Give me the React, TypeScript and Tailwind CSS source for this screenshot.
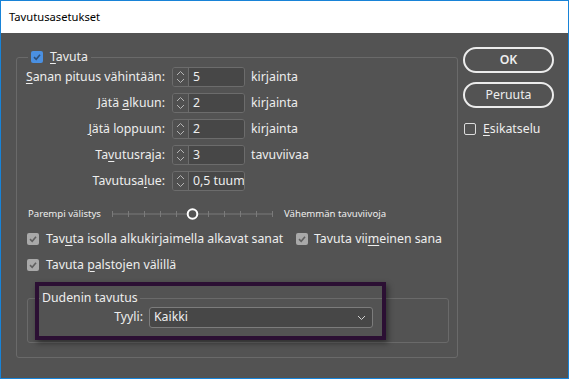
import React from "react";

const TXT = "text-[#eeeeee]";

function Check({ color = "bg-[#a9a9a9]", tick = "#5f5f5f" }: { color?: string; tick?: string }) {
  return (
    <span className={`flex h-[12px] w-[12px] shrink-0 items-center justify-center rounded-[2px] ${color}`}>
      <svg width="10" height="10" viewBox="0 0 10 10">
        <polyline points="2,5.2 4.2,7.3 8,2.8" fill="none" stroke={tick} strokeWidth="1.6" />
      </svg>
    </span>
  );
}

function Spin({ label, value, unit }: { label: React.ReactNode; value: string; unit?: string }) {
  return (
    <div className="flex h-[20px] items-center">
      <div className="w-[148px] whitespace-nowrap text-right">{label}</div>
      <div className="ml-[7px] flex h-[20px] w-[73px] overflow-hidden rounded-[3px] border border-[#6c6c6c]">
        <div className="flex w-[16px] flex-col items-center justify-center border-r border-[#6c6c6c] bg-[#505050]">
          <svg width="9" height="16" viewBox="0 0 9 16">
            <polyline points="1,6 4.5,2.5 8,6" fill="none" stroke="#b5b5b5" strokeWidth="1" />
            <polyline points="1,10 4.5,13.5 8,10" fill="none" stroke="#b5b5b5" strokeWidth="1" />
          </svg>
        </div>
        <div className="flex-1 overflow-hidden whitespace-nowrap bg-[#474747] pl-[4px] leading-[18px]">{value}</div>
      </div>
      {unit && <span className="ml-[6px]">{unit}</span>}
    </div>
  );
}

export default function App() {
  return (
    <div
      className={`relative flex h-[379px] w-[569px] flex-col border border-[#1883d7] font-['Noto_Sans',sans-serif] text-[12.3px] ${TXT}`}
    >
      <div className="flex h-[32px] items-center bg-white pl-[8px] text-[11.2px] text-black">Tavutusasetukset</div>
      <div className="flex flex-1 bg-[#535353]">
        <fieldset className="ml-[15px] mt-[16px] h-[309px] w-[442px] rounded-[3px] border border-[#6a6a6a] pb-[14px]">
          <legend className="ml-[11px] flex h-[16px] items-center px-[3px]">
            <Check color="bg-[#4a90e2]" tick="#2d4f78" />
            <span className="ml-[7px]">
              <u className="underline-offset-2">T</u>avuta
            </span>
          </legend>
          <div className="mt-[2px] flex flex-col gap-[6px]">
            <Spin
              label={
                <>
                  <u className="underline-offset-2">S</u>anan pituus vähintään:
                </>
              }
              value="5"
              unit="kirjainta"
            />
            <Spin
              label={
                <>
                  Jätä <u className="underline-offset-2">a</u>lkuun:
                </>
              }
              value="2"
              unit="kirjainta"
            />
            <Spin
              label={
                <>
                  <u className="underline-offset-2">J</u>ätä loppuun:
                </>
              }
              value="2"
              unit="kirjainta"
            />
            <Spin
              label={
                <>
                  Ta<u className="underline-offset-2">v</u>utusraja:
                </>
              }
              value="3"
              unit="tavuviivaa"
            />
            <Spin
              label={
                <>
                  Tavutusa<u className="underline-offset-2">l</u>ue:
                </>
              }
              value="0,5 tuum"
            />
          </div>
          <div className="mt-[16px] flex h-[14px] items-center text-[9.6px]">
            <span className="ml-[11px] w-[84px] whitespace-nowrap">Parempi välistys</span>
            <svg width="161" height="14" viewBox="0 0 161 14">
              <line x1="0" y1="7" x2="160" y2="7" stroke="#7a7a7a" strokeWidth="1" />
              {[0, 1, 2, 3, 4, 6, 7, 8, 9, 10].map((k) => (
                <line key={k} x1={k * 16 + 0.5} y1="4" x2={k * 16 + 0.5} y2="10" stroke="#7a7a7a" strokeWidth="1" />
              ))}
              <circle cx="80.5" cy="7" r="4.8" fill="#535353" stroke="#ffffff" strokeWidth="2" />
            </svg>
            <span className="ml-[11px] whitespace-nowrap">Vähemmän tavuviivoja</span>
          </div>
          <div className="mt-[10px] flex h-[16px] items-center">
            <div className="ml-[10px] flex w-[269px] items-center">
              <Check />
              <span className="ml-[7px] whitespace-nowrap">
                Tav<u className="underline-offset-2">u</u>ta isolla alkukirjaimella alkavat sanat
              </span>
            </div>
            <Check />
            <span className="ml-[6px] whitespace-nowrap">
              Tavuta vii<u className="underline-offset-2">m</u>einen sana
            </span>
          </div>
          <div className="mt-[10px] flex h-[16px] items-center">
            <div className="ml-[10px] flex items-center">
              <Check />
              <span className="ml-[7px] whitespace-nowrap">
                Tavuta <u className="underline-offset-2">p</u>alstojen välillä
              </span>
            </div>
          </div>
          <fieldset className="ml-[10px] mt-[18px] w-[422px] rounded-[3px] border border-[#6a6a6a] pb-[14px]">
            <legend className="ml-[12px] h-[14px] px-[2px] leading-[14px]">Dudenin tavutus</legend>
            <div className="mt-[2px] flex h-[21px] items-center">
              <div className="w-[115px] text-right">Tyyli:</div>
              <div className="ml-[6px] flex h-[21px] w-[224px] items-center justify-between rounded-[3px] border border-[#7c7c7c] bg-[#474747] pl-[4px] pr-[6px]">
                <span>Kaikki</span>
                <svg width="9" height="6" viewBox="0 0 9 6">
                  <polyline points="1,1 4.5,4.5 8,1" fill="none" stroke="#d0d0d0" strokeWidth="1" />
                </svg>
              </div>
            </div>
          </fieldset>
        </fieldset>
        <div className="ml-[5px] mt-[14px] flex flex-col">
          <button className="flex h-[26px] w-[91px] items-center justify-center rounded-full border-2 border-[#ececec] font-semibold">
            OK
          </button>
          <button className="mt-[9px] flex h-[26px] w-[91px] items-center justify-center rounded-full border-2 border-[#ececec]">
            Peruuta
          </button>
          <div className="mt-[13px] flex h-[16px] items-center">
            <span className="ml-[1px] h-[12px] w-[12px] rounded-[2px] border border-[#dcdcdc]" />
            <span className="ml-[7px]">
              <u className="underline-offset-2">E</u>sikatselu
            </span>
          </div>
        </div>
      </div>
      <div className="pointer-events-none absolute left-[34px] top-[281px] h-[58px] w-[351px] border-4 border-[#2b0f33] shadow-[2px_3px_6px_rgba(0,0,0,0.45)]" />
    </div>
  );
}
